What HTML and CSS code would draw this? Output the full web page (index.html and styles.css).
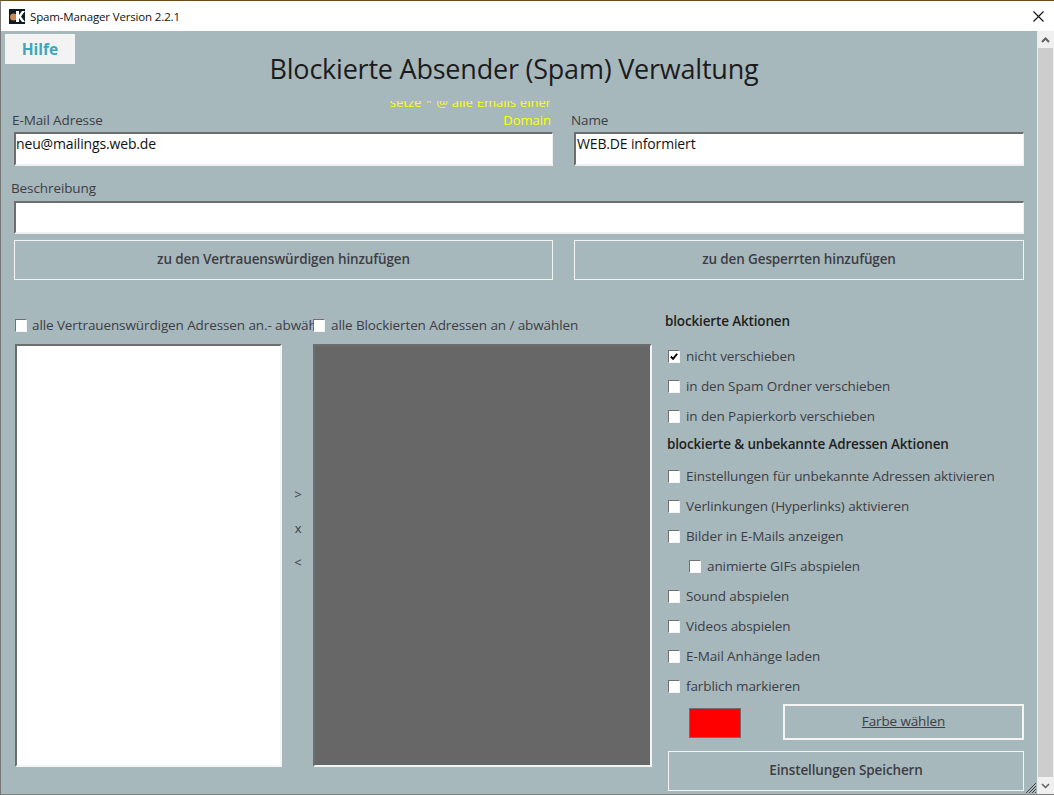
FILE: index.html
```html
<!DOCTYPE html>
<html lang="de">
<head>
<meta charset="utf-8">
<title>Spam-Manager</title>
<link rel="stylesheet" href="styles.css">
</head>
<body>
<div class="window">
  <header class="titlebar">
    <svg class="app-icon" width="16" height="15" viewBox="0 0 16 15"><rect width="16" height="15" fill="#0c1c20"/><circle cx="4.500" cy="8" r="3.500" fill="#c98a55"/><path d="M7 2h3v4L13 2h3l-4 5.500 4 5.500h-3l-3-4v4H7z" fill="#fff"/></svg>
    <span class="app-title">Spam-Manager Version 2.2.1</span>
    <svg class="close" width="11" height="11" viewBox="0 0 11 11"><path d="M.5.500l10 10M10.500.500l-10 10" stroke="#111" stroke-width="1.100" fill="none"/></svg>
  </header>
  <div class="client">
    <main class="form">
      <div class="top">
        <button class="help">Hilfe</button>
        <h1 class="heading">Blockierte Absender (Spam) Verwaltung</h1>
      </div>
      <section class="fields">
        <div class="field">
          <div class="label-row">
            <span class="label">E-Mail Adresse</span>
            <span class="hint"><span class="hint-text">setze * @ alle Emails einer Domain</span></span>
          </div>
          <div class="input">neu@mailings.web.de</div>
        </div>
        <div class="field">
          <div class="label-row"><span class="label">Name</span></div>
          <div class="input">WEB.DE informiert</div>
        </div>
      </section>
      <section class="desc">
        <span class="label">Beschreibung</span>
        <div class="input input-wide"></div>
      </section>
      <section class="actions">
        <button class="btn">zu den Vertrauenswürdigen hinzufügen</button>
        <button class="btn">zu den Gesperrten hinzufügen</button>
      </section>
      <section class="lower">
        <div class="lists">
          <div class="list-head">
            <label class="check head-a"><span class="box"></span><span class="clip">alle Vertrauenswürdigen Adressen an.- abwählen</span></label>
            <label class="check"><span class="box"></span><span>alle Blockierten Adressen an / abwählen</span></label>
          </div>
          <div class="list-body">
            <div class="list list-white"></div>
            <div class="arrows"><span>&gt;</span><span>x</span><span>&lt;</span></div>
            <div class="list list-dark"></div>
          </div>
        </div>
        <aside class="options">
          <h2 class="opt-title first">blockierte Aktionen</h2>
          <div class="opt-group">
            <label class="check opt"><span class="box"><svg width="11" height="11" viewBox="0 0 11 11"><path d="M2 5.500l2.500 2.500L9 2.500" stroke="#000" stroke-width="2" fill="none"/></svg></span><span>nicht verschieben</span></label>
            <label class="check opt"><span class="box"></span><span>in den Spam Ordner verschieben</span></label>
            <label class="check opt"><span class="box"></span><span>in den Papierkorb verschieben</span></label>
          </div>
          <h2 class="opt-title second">blockierte &amp; unbekannte Adressen Aktionen</h2>
          <div class="opt-group">
            <label class="check opt"><span class="box"></span><span>Einstellungen für unbekannte Adressen aktivieren</span></label>
            <label class="check opt"><span class="box"></span><span>Verlinkungen (Hyperlinks) aktivieren</span></label>
            <label class="check opt"><span class="box"></span><span>Bilder in E-Mails anzeigen</span></label>
            <label class="check opt sub"><span class="box"></span><span>animierte GIFs abspielen</span></label>
            <label class="check opt"><span class="box"></span><span>Sound abspielen</span></label>
            <label class="check opt"><span class="box"></span><span>Videos abspielen</span></label>
            <label class="check opt"><span class="box"></span><span>E-Mail Anhänge laden</span></label>
            <label class="check opt"><span class="box"></span><span>farblich markieren</span></label>
          </div>
          <div class="color-row">
            <div class="swatch"></div>
            <button class="btn btn-color">Farbe wählen</button>
          </div>
          <button class="btn btn-save">Einstellungen Speichern</button>
        </aside>
      </section>
    </main>
    <div class="scrollbar">
      <div class="sb-arrow"><svg width="9" height="6" viewBox="0 0 9 6"><path d="M1 5l3.500-3.500L8 5" stroke="#606060" stroke-width="2" fill="none"/></svg></div>
      <div class="sb-track"></div>
      <div class="sb-arrow"><svg width="9" height="6" viewBox="0 0 9 6"><path d="M1 1l3.500 3.500L8 1" stroke="#606060" stroke-width="1.500" fill="none"/></svg></div>
    </div>
    <svg class="grip" width="14" height="14" viewBox="0 0 14 14"><path d="M13 3L3 13M13 6L6 13M13 9L9 13M13 12L12 13" stroke="#444" stroke-width="1" fill="none"/></svg>
  </div>
</div>
</body>
</html>
```
FILE: styles.css
```css
* { box-sizing: border-box; }
html, body { margin: 0; height: 100%; overflow: hidden; }
body { font-family: "Open Sans", "Noto Sans", sans-serif; font-size: 13.500px; color: #3d3d45; }
button { font: inherit; color: inherit; padding: 0; cursor: default; }

.window { width: 1054px; height: 795px; display: flex; flex-direction: column; background: #fff; border-top: 1px solid #6b4a20; border-bottom: 1px solid #808080; border-left: 1px solid #777; }

.titlebar { height: 30px; flex: none; display: flex; align-items: center; padding: 0 10px 0 8px; background: #fff; color: #111; }
.app-icon { flex: none; }
.app-title { margin-left: 5px; font-size: 11.500px; letter-spacing: -0.150px; }
.close { margin-left: auto; }

.client { flex: 1; min-height: 0; display: flex; position: relative; background: #a7b8bc; }
.form { flex: 1; min-width: 0; padding: 3px 12px 0 4px; }
.scrollbar { width: 17px; flex: none; display: flex; flex-direction: column; background: #f0f0f0; border-left: 1px solid #ececec; border-right: 1px solid #f0f0f0; }
.sb-arrow { height: 17px; flex: none; display: flex; align-items: center; justify-content: center; }
.sb-track { flex: 1; background: #cdcdcd; }
.grip { position: absolute; right: 17px; bottom: 0; }

.top { height: 67px; display: flex; align-items: flex-start; }
.help { width: 70px; height: 30px; border: 0; background: #f3f3f3; color: #3ea6bb; font-size: 15.500px; font-weight: 700; }
.heading { flex: none; width: 950px; margin: 15px 0 0 -36px; text-align: center; font-size: 27px; font-weight: 400; line-height: 40px; color: #1c1c1e; letter-spacing: -0.220px; }

.fields { display: grid; grid-template-columns: 539px 450px; column-gap: 21px; padding-left: 9px; }
.label-row { height: 31px; display: flex; align-items: flex-end; justify-content: space-between; padding-bottom: 3px; }
.label { font-size: 13.500px; line-height: 18px; letter-spacing: -0.100px; margin-left: -2px; }
.field:last-child .label { margin-left: -3px; }
.hint { width: 170px; height: 28px; flex: none; overflow: hidden; display: flex; align-items: flex-end; justify-content: flex-end; text-align: right; color: #ffff00; font-size: 13px; line-height: 18px; padding-right: 2px; word-spacing: 0.500px; }
.input { height: 34px; background: #fff; border-style: solid; border-width: 2px 1px 2px 2px; border-color: #6e6e6e #f0f0f0 #f0f0f0 #6e6e6e; padding: 1px 0 0 1px; font-size: 14px; line-height: 18px; color: #111; letter-spacing: -0.150px; }
.field:first-child .input { padding-left: 0; }

.desc { margin-top: 13px; padding-left: 9px; width: 1019px; }
.desc .label { display: block; line-height: 18px; margin-left: -3px; }
.input-wide { margin-top: 4px; height: 33px; }

.actions { display: grid; grid-template-columns: 539px 450px; column-gap: 21px; padding-left: 9px; margin-top: 6px; }
.btn { height: 40px; background: transparent; border: 1px solid #f4f4f4; padding-bottom: 2px; font-weight: 600; font-size: 13.500px; letter-spacing: -0.130px; }

.lower { display: flex; margin-top: 29px; padding-left: 9px; }
.lists { width: 638px; flex: none; }
.list-head { height: 35px; display: flex; padding: 7px 0 0 1px; }
.check { display: flex; align-items: center; gap: 6px; font-size: 13.500px; letter-spacing: -0.100px; white-space: nowrap; height: 18px; }
.head-a { width: 298px; overflow: hidden; flex: none; gap: 5px; }
.clip { overflow: hidden; }
.box { width: 12px; height: 13px; flex: none; background: #fff; border-style: solid; border-width: 1px; border-color: #707070 #f4f4f4 #f4f4f4 #707070; display: flex; align-items: center; justify-content: center; }
.list-body { display: flex; height: 423px; padding-left: 1px; }
.list { border-style: solid; border-width: 2px; border-color: #6e6e6e #f4f4f4 #f4f4f4 #6e6e6e; }
.list-white { width: 267px; background: #fff; }
.list-dark { width: 340px; background: #676767; }
.arrows { width: 31px; display: flex; flex-direction: column; align-items: center; padding: 141px 0 0 2px; gap: 16px; font-size: 13px; line-height: 18px; }

.options { width: 360px; margin-left: 13px; flex: none; }
.opt-title { margin: 0; font-size: 13.500px; line-height: 18px; font-weight: 600; color: #1f1f22; letter-spacing: -0.150px; }
.opt-title.first { margin-top: 3px; }
.opt-title.second { margin-left: 2px; margin-top: 10px; }
.opt-group { display: flex; flex-direction: column; gap: 12px; padding-left: 3px; }
.first + .opt-group { margin-top: 17px; }
.second + .opt-group { margin-top: 14px; }
.sub { margin-left: 21px; }
.color-row { display: flex; margin-top: 9px; align-items: center; padding-left: 24px; }
.swatch { width: 52px; height: 30px; margin-top: 2px; background: #ff0000; border: 1px solid #6e6e6e; }
.btn-color { width: 241px; height: 36px; margin-left: 42px; border-width: 2px; font-weight: 400; text-decoration: underline; }
.btn-save { display: block; width: 356px; height: 40px; margin: 11px 0 0 3px; }
```
